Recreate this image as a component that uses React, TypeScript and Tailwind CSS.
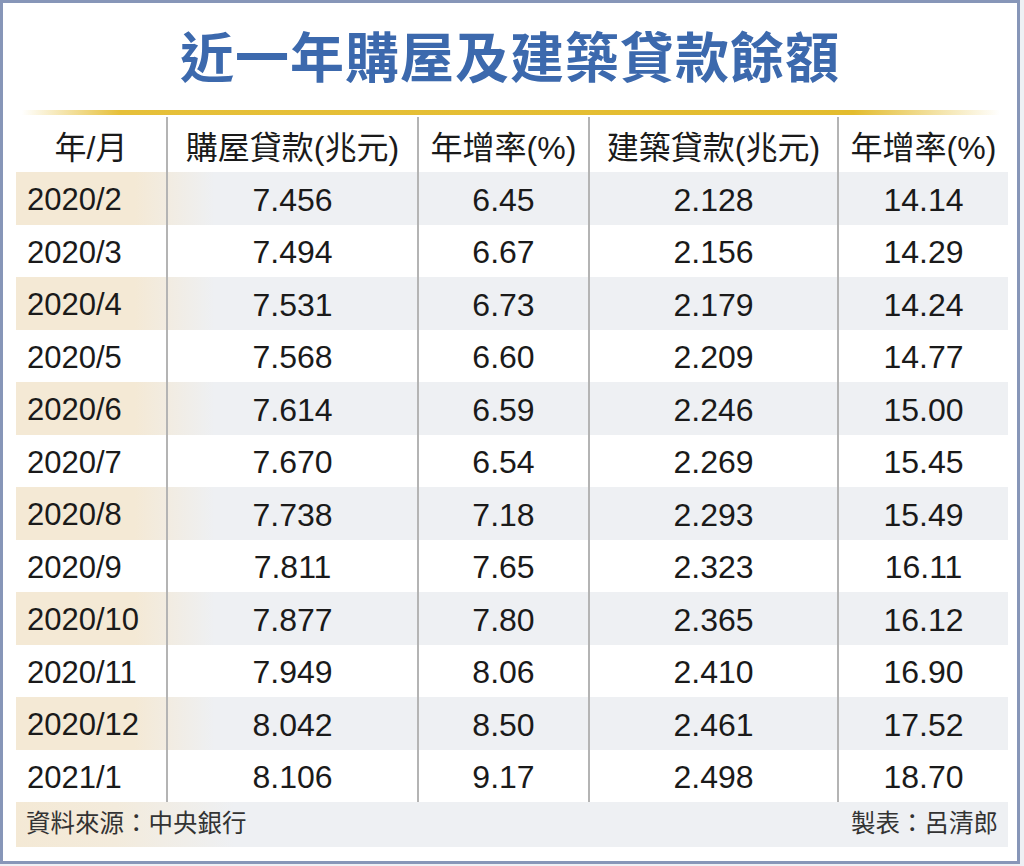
import React from 'react';

const rows: [string, string, string, string, string][] = [
  ['2020/2', '7.456', '6.45', '2.128', '14.14'],
  ['2020/3', '7.494', '6.67', '2.156', '14.29'],
  ['2020/4', '7.531', '6.73', '2.179', '14.24'],
  ['2020/5', '7.568', '6.60', '2.209', '14.77'],
  ['2020/6', '7.614', '6.59', '2.246', '15.00'],
  ['2020/7', '7.670', '6.54', '2.269', '15.45'],
  ['2020/8', '7.738', '7.18', '2.293', '15.49'],
  ['2020/9', '7.811', '7.65', '2.323', '16.11'],
  ['2020/10', '7.877', '7.80', '2.365', '16.12'],
  ['2020/11', '7.949', '8.06', '2.410', '16.90'],
  ['2020/12', '8.042', '8.50', '2.461', '17.52'],
  ['2021/1', '8.106', '9.17', '2.498', '18.70'],
];

const cjk = "font-['Liberation_Sans','Noto_Sans_CJK_TC',sans-serif]";
const num = "font-['Liberation_Sans',Arial,sans-serif]";

const cols = ['w-[150px]', 'w-[251px]', 'w-[171px]', 'w-[249px]', 'w-[171px]'];

const App = () => {
  return (
    <div className="w-[1024px] h-[866px] bg-[#eef0f4]">
      <div className="w-[1020px] h-[864px] border-[3px] border-[#8796b8] bg-white flex flex-col">
        {/* Title */}
        <div className="h-[106px] flex items-center justify-center pt-[6px]">
          <h1 className={`${cjk} text-[54px] font-bold text-[#3c69ad] tracking-[1px] leading-none`}>
            近一年購屋及建築貸款餘額
          </h1>
        </div>

        {/* Gold rule */}
        <div className="ml-[19px] mt-[1px] w-[978px] h-[5px] bg-[linear-gradient(to_right,rgba(232,196,60,0)_0%,#e6c03a_10%,#e3bc2e_85%,rgba(232,196,60,0)_100%)]" />

        {/* Table */}
        <div className="ml-[13px] w-[992px] flex flex-col">
          <div className="flex h-[57px] pt-[2px]">
            {['年/月', '購屋貸款(兆元)', '年增率(%)', '建築貸款(兆元)', '年增率(%)'].map((h, i) => (
              <div
                key={i}
                className={`${cols[i]} ${i > 0 ? 'border-l-2 border-[#b4b4b4]' : ''} flex items-center justify-center pt-[6px] ${cjk} text-[32px] text-[#1a1a1a]`}
              >
                {h}
              </div>
            ))}
          </div>

          {rows.map((r, ri) => (
            <div
              key={r[0]}
              className={`flex h-[52.5px] ${
                ri % 2 === 0
                  ? 'bg-[linear-gradient(to_right,#f4e9d5_0%,#f4e9d5_12%,#eef0f3_20%,#eef0f3_100%)]'
                  : 'bg-white'
              }`}
            >
              {r.map((c, i) => (
                <div
                  key={i}
                  className={`${cols[i]} ${i > 0 ? 'border-l-2 border-[#b4b4b4] justify-center' : 'pl-[11px]'} flex items-center pt-[3px] ${num} ${i === 0 ? 'text-[31px]' : 'text-[32px]'} text-[#1a1a1a] leading-none`}
                >
                  {c}
                </div>
              ))}
            </div>
          ))}

          {/* Footer */}
          <div className="h-[45px] flex items-center justify-between px-[10px] bg-[linear-gradient(to_right,#f4e9d5_0%,#f3ebdc_10%,#eef0f3_22%,#eef0f3_100%)]">
            <span className={`${cjk} text-[24.5px] text-[#333]`}>資料來源：中央銀行</span>
            <span className={`${cjk} text-[24.5px] text-[#333]`}>製表：呂清郎</span>
          </div>
        </div>
      </div>
    </div>
  );
};

export default App;
